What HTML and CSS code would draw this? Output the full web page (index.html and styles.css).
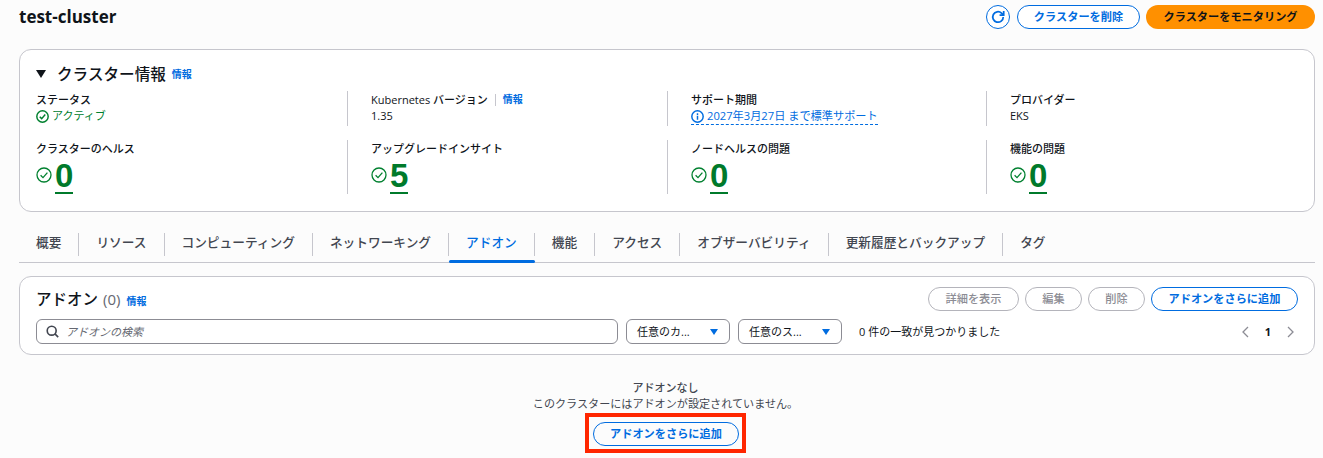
FILE: index.html
```html
<!DOCTYPE html>
<html lang="ja">
<head>
<meta charset="utf-8">
<title>test-cluster</title>
<link rel="stylesheet" href="styles.css">
</head>
<body>
<header class="page-head">
  <h1 class="page-title">test-cluster</h1>
  <div class="head-actions">
    <button class="btn btn-icon" aria-label="更新">
      <svg width="14" height="14" viewBox="0 0 16 16" fill="none" stroke="currentColor" stroke-width="2"><path d="M14 8a6 6 0 1 1-2-4.5L14 5.5"/><path d="M14.5 1v4.8H9.8"/></svg>
    </button>
    <button class="btn btn-normal btn-delete">クラスターを削除</button>
    <button class="btn btn-primary">クラスターをモニタリング</button>
  </div>
</header>

<section class="card info-card">
  <div class="info-title-row">
    <span class="caret"></span>
    <h2 class="info-title">クラスター情報</h2>
    <a class="info-link">情報</a>
  </div>
  <div class="info-grid">
    <div class="info-cell first">
      <div class="label">ステータス</div>
      <div class="status">
        <svg class="check" width="13" height="13" viewBox="0 0 16 16" fill="none" stroke="currentColor" stroke-width="1.8"><circle cx="8" cy="8" r="7"/><path d="M4.6 8.2 7 10.6l4.4-5"/></svg>
        アクティブ
      </div>
    </div>
    <div class="info-cell">
      <div class="label">Kubernetes バージョン<span class="pipe"></span><a class="info-link">情報</a></div>
      <div class="value">1.35</div>
    </div>
    <div class="info-cell">
      <div class="label">サポート期間</div>
      <div class="support">
        <svg width="13" height="13" viewBox="0 0 16 16" fill="none" stroke="currentColor" stroke-width="1.8"><circle cx="8" cy="8" r="7"/><path d="M8 7v5M8 4v2"/></svg>
        2027年3月27日 まで標準サポート
      </div>
    </div>
    <div class="info-cell">
      <div class="label">プロバイダー</div>
      <div class="value">EKS</div>
    </div>
  </div>
  <div class="info-grid metrics">
    <div class="info-cell first metric">
      <div class="label">クラスターのヘルス</div>
      <div class="metric-row">
        <svg class="metric-icon" width="16" height="16" viewBox="0 0 16 16" fill="none" stroke="currentColor" stroke-width="1.3"><circle cx="8" cy="8" r="7"/><path d="M4.6 8.2 7 10.6l4.4-5"/></svg>
        <span class="metric-num">0</span>
      </div>
    </div>
    <div class="info-cell metric">
      <div class="label">アップグレードインサイト</div>
      <div class="metric-row">
        <svg class="metric-icon" width="16" height="16" viewBox="0 0 16 16" fill="none" stroke="currentColor" stroke-width="1.3"><circle cx="8" cy="8" r="7"/><path d="M4.6 8.2 7 10.6l4.4-5"/></svg>
        <span class="metric-num">5</span>
      </div>
    </div>
    <div class="info-cell metric">
      <div class="label">ノードヘルスの問題</div>
      <div class="metric-row">
        <svg class="metric-icon" width="16" height="16" viewBox="0 0 16 16" fill="none" stroke="currentColor" stroke-width="1.3"><circle cx="8" cy="8" r="7"/><path d="M4.6 8.2 7 10.6l4.4-5"/></svg>
        <span class="metric-num">0</span>
      </div>
    </div>
    <div class="info-cell metric">
      <div class="label">機能の問題</div>
      <div class="metric-row">
        <svg class="metric-icon" width="16" height="16" viewBox="0 0 16 16" fill="none" stroke="currentColor" stroke-width="1.3"><circle cx="8" cy="8" r="7"/><path d="M4.6 8.2 7 10.6l4.4-5"/></svg>
        <span class="metric-num">0</span>
      </div>
    </div>
  </div>
</section>

<nav class="tabs">
  <a class="tab">概要</a>
  <a class="tab">リソース</a>
  <a class="tab">コンピューティング</a>
  <a class="tab">ネットワーキング</a>
  <a class="tab active">アドオン</a>
  <a class="tab">機能</a>
  <a class="tab">アクセス</a>
  <a class="tab">オブザーバビリティ</a>
  <a class="tab">更新履歴とバックアップ</a>
  <a class="tab last">タグ</a>
</nav>

<section class="card addon-card">
  <div class="addon-head">
    <div class="addon-title-wrap">
      <h2 class="addon-title">アドオン</h2>
      <span class="addon-count">(0)</span>
      <a class="info-link">情報</a>
    </div>
    <div class="addon-actions">
      <button class="btn btn-disabled btn-details">詳細を表示</button>
      <button class="btn btn-disabled btn-short">編集</button>
      <button class="btn btn-disabled btn-short">削除</button>
      <button class="btn btn-normal btn-add">アドオンをさらに追加</button>
    </div>
  </div>
  <div class="filter-row">
    <div class="search">
      <svg width="13" height="13" viewBox="0 0 16 16" fill="none" stroke="#424650" stroke-width="2"><circle cx="7" cy="7" r="5.5"/><path d="m11 11 4 4"/></svg>
      <span class="placeholder">アドオンの検索</span>
    </div>
    <div class="select"><span>任意のカ...</span><i class="select-caret"></i></div>
    <div class="select"><span>任意のス...</span><i class="select-caret"></i></div>
    <span class="match-count">0 件の一致が見つかりました</span>
    <div class="pager">
      <svg width="10" height="12" viewBox="0 0 10 12" fill="none" stroke="#8c8c94" stroke-width="1.3"><path d="M8 1 3 6l5 5"/></svg>
      <span class="page-num">1</span>
      <svg width="10" height="12" viewBox="0 0 10 12" fill="none" stroke="#8c8c94" stroke-width="1.3"><path d="m2 1 5 5-5 5"/></svg>
    </div>
  </div>
</section>

<section class="empty">
  <div class="empty-title">アドオンなし</div>
  <div class="empty-sub">このクラスターにはアドオンが設定されていません。</div>
  <div class="highlight">
    <button class="btn btn-normal btn-empty">アドオンをさらに追加</button>
  </div>
</section>
</body>
</html>
```

FILE: styles.css
```css
* { box-sizing: border-box; }
html, body { height: 458px; overflow: hidden; }
body {
  margin: 0;
  padding: 5px 8px 0 19px;
  background: #fcfcfc;
  color: #0f141a;
  font-family: "Open Sans", "Noto Sans CJK JP", sans-serif;
  font-size: 11px;
  line-height: 14px;
}
h1, h2 { margin: 0; }
.page-head { display: flex; justify-content: space-between; align-items: flex-start; height: 44px; }
.page-title { font-size: 17px; line-height: 24px; font-weight: 700; }
.head-actions { display: flex; gap: 6px; }
.btn {
  height: 24px;
  padding: 0;
  border-radius: 12px;
  font-family: inherit;
  font-size: 11.2px;
  font-weight: 700;
  line-height: 14px;
  background: #fff;
  cursor: pointer;
}
.btn-icon { width: 24px; margin-right: 1px; color: #006ce0; border: 1px solid #006ce0; display: flex; align-items: center; justify-content: center; }
.btn-normal { color: #006ce0; border: 1px solid #006ce0; }
.btn-delete { width: 123px; }
.btn-primary { width: 169px; border: 0; background: #ff9000; color: #0f141a; }
.btn-disabled { color: #8c8c94; border: 1px solid #b4b4bb; font-weight: 500; background: transparent; }
.btn-details { width: 91px; }
.btn-short { width: 57px; }
.btn-add { width: 147px; }
.btn-empty { width: 146px; background: transparent; }

.card { background: #fff; border: 1px solid #c6c6cd; border-radius: 12px; }
.info-card { height: 163px; padding: 12px 16px 0; }
.info-title-row { display: flex; align-items: center; height: 24px; }
.caret {
  width: 0; height: 0;
  margin-right: 11px;
  border-left: 5px solid transparent;
  border-right: 5px solid transparent;
  border-top: 8px solid #0f141a;
}
.info-title { font-size: 15.6px; line-height: 22px; font-weight: 500; margin-right: 6px; }
.info-link { color: #006ce0; font-size: 10px; font-weight: 700; }
.info-grid { display: grid; grid-template-columns: 311px 320px 319px 1fr; height: 33px; margin-top: 5px; }
.metrics { height: 54px; margin-top: 16px; }
.info-cell { padding-left: 23px; border-left: 1px solid #c6c6cd; }
.info-cell.first { padding-left: 0; border-left: 0; }
.label { font-weight: 500; line-height: 15px; padding-top: 1px; display: flex; align-items: center; }
.pipe { width: 1px; height: 12px; background: #c6c6cd; margin: 0 7px; }
.value { margin-top: 1px; line-height: 16px; }
.status { color: #00802f; display: flex; align-items: center; gap: 3px; line-height: 16px; margin-top: 1px; }
.support {
  color: #006ce0;
  display: inline-flex;
  align-items: center;
  gap: 3px;
  font-size: 11.2px;
  line-height: 16px;
  margin-top: 1px;
  border-bottom: 1px dashed #006ce0;
}
.metric-row { display: flex; align-items: flex-start; gap: 3px; color: #00802f; }
.metric-icon { margin-top: 11px; }
.metric-num {
  font-family: "Liberation Sans", sans-serif;
  font-size: 33px;
  line-height: 36px;
  font-weight: 700;
  color: #007a2b;
  padding-top: 2px;
  border-bottom: 2px solid #007a2b;
  display: block;
  height: 38px;
}

.tabs { display: flex; height: 41px; margin-top: 10px; padding-top: 11px; border-bottom: 1px solid #c6c6cd; }
.tab {
  position: relative;
  height: 23px;
  padding: 0 17px;
  border-right: 1px solid #c6c6cd;
  font-size: 12.7px;
  font-weight: 500;
  line-height: 19px;
  color: #424650;
}
.tab.last { border-right: 0; }
.tab.active { color: #006ce0; }
.tab.active::after {
  content: "";
  position: absolute;
  left: 0; right: -1px; bottom: -7px;
  height: 3px;
  background: #006ce0;
  border-radius: 2px;
}

.addon-card { height: 79px; margin-top: 13px; padding: 10px 16px 0; }
.addon-head { display: flex; justify-content: space-between; align-items: flex-start; height: 32px; }
.addon-title-wrap { display: flex; align-items: baseline; gap: 5px; height: 24px; }
.addon-title { font-size: 15.5px; line-height: 24px; font-weight: 500; }
.addon-count { font-size: 15px; color: #656871; margin-right: 1px; }
.addon-actions { display: flex; gap: 6px; }
.filter-row { display: flex; align-items: center; height: 25px; }
.search {
  display: flex;
  align-items: center;
  gap: 7px;
  width: 582px;
  height: 25px;
  padding-left: 9px;
  border: 1px solid #8c8c94;
  border-radius: 6px;
  margin-right: 8px;
}
.placeholder { font-style: italic; color: #656871; }
.select {
  display: flex;
  align-items: center;
  justify-content: space-between;
  width: 104px;
  height: 25px;
  padding: 0 11px 0 10px;
  border: 1px solid #8c8c94;
  border-radius: 6px;
  margin-right: 8px;
}
.select-caret {
  width: 0; height: 0;
  border-left: 4.5px solid transparent;
  border-right: 4.5px solid transparent;
  border-top: 6px solid #006ce0;
}
.match-count { margin-left: 9px; }
.pager { margin-left: auto; display: flex; align-items: center; gap: 15px; padding-right: 2px; }
.page-num { font-weight: 700; }

.empty { display: flex; flex-direction: column; align-items: center; margin-top: 26px; padding-right: 3px; }
.empty-title { font-weight: 500; color: #424650; line-height: 14px; }
.empty-sub { color: #424650; font-size: 11.1px; line-height: 16px; margin-top: 1px; }
.highlight { margin-top: 1px; padding: 5px 4px 3px; border: 4px solid #ff2600; height: 40px; width: 161px; }
```
